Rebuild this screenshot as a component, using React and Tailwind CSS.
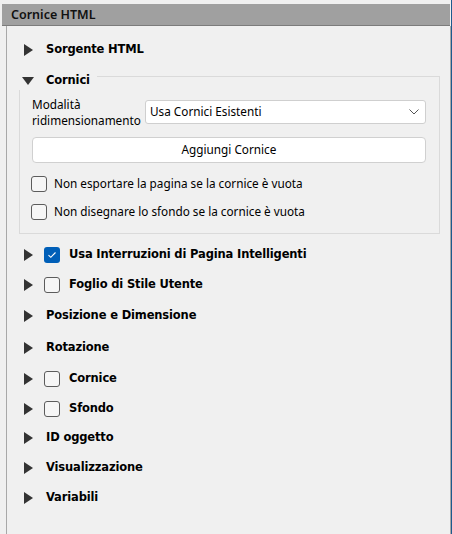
import React from "react";

const bold = { fontFamily: '"DejaVu Sans", Verdana, sans-serif', letterSpacing: "-0.15px" };
const ui = { fontFamily: '"Noto Sans", "Open Sans", sans-serif' };

function ArrowRight() {
  return (
    <svg width="9" height="12" viewBox="0 0 9 12" className="shrink-0">
      <path d="M0 0 L9 6 L0 12 Z" fill="#333333" />
    </svg>
  );
}

function ArrowDown() {
  return (
    <svg width="12" height="8" viewBox="0 0 12 8" className="shrink-0">
      <path d="M0 0 L12 0 L6 8 Z" fill="#333333" />
    </svg>
  );
}

function Box({ checked }) {
  if (checked) {
    return (
      <div className="w-[16px] h-[16px] rounded-[3px] bg-[#005fb8] flex items-center justify-center shrink-0">
        <svg width="10" height="8" viewBox="0 0 10 8">
          <path d="M1.5 4.2 L3.8 6.3 L8.5 1.5" stroke="#fff" strokeWidth="1.1" fill="none" />
        </svg>
      </div>
    );
  }
  return <div className="w-[16px] h-[16px] rounded-[3px] border border-[#5c5c5c] bg-[#f6f6f6] shrink-0" />;
}

function Section({ label, check, h }) {
  return (
    <div className="flex items-center pl-[17px]" style={{ height: h }}>
      <ArrowRight />
      {check === undefined ? (
        <span className="ml-[13px] text-[11.5px] font-bold text-black" style={bold}>{label}</span>
      ) : (
        <>
          <div className="ml-[11px]"><Box checked={check} /></div>
          <span className="ml-[9px] text-[11.5px] font-bold text-black" style={bold}>{label}</span>
        </>
      )}
    </div>
  );
}

export default function App() {
  return (
    <div className="w-[452px] h-[534px] bg-[#f0f0f0] border-r border-[#1d5a8e] pt-[4px] pl-[2px] overflow-hidden flex flex-col">
      <div
        className="h-[22px] mr-[1px] bg-[#a0a0a0] border-b border-[#7c7c7c] flex items-center pl-[9px] pt-[2px] text-[12.5px] font-semibold text-[#111] shrink-0"
        style={ui}
      >
        Cornice HTML
      </div>
      <div className="ml-[4px] flex-1 border-l border-r border-[#a8a8a8] flex flex-col">
        <div className="mt-[13px]">
          <div className="flex items-center pl-[17px] h-[22px]">
            <ArrowRight />
            <span className="ml-[13px] text-[11.5px] font-bold text-black" style={bold}>Sorgente HTML</span>
          </div>
        </div>

        <div className="relative mt-[15px] ml-[12px] w-[421px] h-[158px] border border-[#dadada]">
          <div className="absolute left-[-1px] top-[-5px] w-[78px] h-[18px] bg-[#f0f0f0] flex items-center pl-[3px]">
            <ArrowDown />
            <span className="ml-[12px] text-[11.5px] font-bold text-black" style={bold}>Cornici</span>
          </div>

          <div className="flex items-center pl-[12px] mt-[19px]" style={ui}>
            <div className="w-[113px] text-[11.75px] leading-[16px] text-black">
              Modalità
              <br />
              ridimensionamento
            </div>
            <div className="w-[281px] h-[24px] bg-white border border-[#cfcfcf] rounded-[3px] flex items-center pl-[4px] pr-[6px] justify-between">
              <span className="text-[11.75px] text-black">Usa Cornici Esistenti</span>
              <svg width="10" height="6" viewBox="0 0 10 6">
                <path d="M0.5 0.5 L5 5 L9.5 0.5" stroke="#555" strokeWidth="1" fill="none" />
              </svg>
            </div>
          </div>

          <div
            className="ml-[12px] mt-[9px] w-[394px] h-[26px] bg-white border border-[#d0d0d0] rounded-[4px] flex items-center justify-center text-[11.75px] text-black"
            style={ui}
          >
            Aggiungi Cornice
          </div>

          <div className="flex items-center pl-[11px] mt-[13px] h-[16px]" style={ui}>
            <Box />
            <span className="ml-[7px] text-[11.75px] text-black">Non esportare la pagina se la cornice è vuota</span>
          </div>
          <div className="flex items-center pl-[11px] mt-[12px] h-[16px]" style={ui}>
            <Box />
            <span className="ml-[7px] text-[11.75px] text-black">Non disegnare lo sfondo se la cornice è vuota</span>
          </div>
        </div>

        <div className="mt-[6px]">
          <Section label="Usa Interruzioni di Pagina Intelligenti" check={true} h={30} />
          <Section label="Foglio di Stile Utente" check={false} h={30} />
          <Section label="Posizione e Dimensione" h={31} />
          <Section label="Rotazione" h={33} />
          <Section label="Cornice" check={false} h={30} />
          <Section label="Sfondo" check={false} h={29} />
          <Section label="ID oggetto" h={30} />
          <Section label="Visualizzazione" h={30} />
          <Section label="Variabili" h={30} />
        </div>
      </div>
    </div>
  );
}
